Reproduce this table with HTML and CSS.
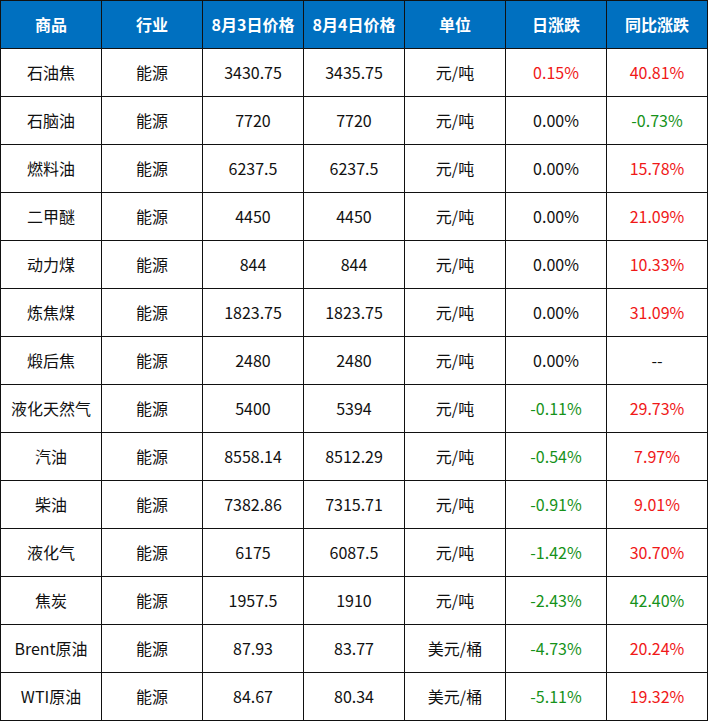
FILE: index.html
```html
<!DOCTYPE html>
<html lang="zh-CN">
<head>
<meta charset="utf-8">
<title>商品价格</title>
<link rel="stylesheet" href="styles.css">
</head>
<body>
<table class="price-table">
  <colgroup>
    <col><col><col><col><col><col><col>
  </colgroup>
  <thead>
    <tr><th>商品</th><th>行业</th><th>8月3日价格</th><th>8月4日价格</th><th>单位</th><th>日涨跌</th><th>同比涨跌</th></tr>
  </thead>
  <tbody>
    <tr><td>石油焦</td><td>能源</td><td>3430.75</td><td>3435.75</td><td>元/吨</td><td class="up">0.15%</td><td class="up">40.81%</td></tr>
    <tr><td>石脑油</td><td>能源</td><td>7720</td><td>7720</td><td>元/吨</td><td>0.00%</td><td class="down">-0.73%</td></tr>
    <tr><td>燃料油</td><td>能源</td><td>6237.5</td><td>6237.5</td><td>元/吨</td><td>0.00%</td><td class="up">15.78%</td></tr>
    <tr><td>二甲醚</td><td>能源</td><td>4450</td><td>4450</td><td>元/吨</td><td>0.00%</td><td class="up">21.09%</td></tr>
    <tr><td>动力煤</td><td>能源</td><td>844</td><td>844</td><td>元/吨</td><td>0.00%</td><td class="up">10.33%</td></tr>
    <tr><td>炼焦煤</td><td>能源</td><td>1823.75</td><td>1823.75</td><td>元/吨</td><td>0.00%</td><td class="up">31.09%</td></tr>
    <tr><td>煅后焦</td><td>能源</td><td>2480</td><td>2480</td><td>元/吨</td><td>0.00%</td><td>--</td></tr>
    <tr><td>液化天然气</td><td>能源</td><td>5400</td><td>5394</td><td>元/吨</td><td class="down">-0.11%</td><td class="up">29.73%</td></tr>
    <tr><td>汽油</td><td>能源</td><td>8558.14</td><td>8512.29</td><td>元/吨</td><td class="down">-0.54%</td><td class="up">7.97%</td></tr>
    <tr><td>柴油</td><td>能源</td><td>7382.86</td><td>7315.71</td><td>元/吨</td><td class="down">-0.91%</td><td class="up">9.01%</td></tr>
    <tr><td>液化气</td><td>能源</td><td>6175</td><td>6087.5</td><td>元/吨</td><td class="down">-1.42%</td><td class="up">30.70%</td></tr>
    <tr><td>焦炭</td><td>能源</td><td>1957.5</td><td>1910</td><td>元/吨</td><td class="down">-2.43%</td><td class="down">42.40%</td></tr>
    <tr><td>Brent原油</td><td>能源</td><td>87.93</td><td>83.77</td><td>美元/桶</td><td class="down">-4.73%</td><td class="up">20.24%</td></tr>
    <tr><td>WTI原油</td><td>能源</td><td>84.67</td><td>80.34</td><td>美元/桶</td><td class="down">-5.11%</td><td class="up">19.32%</td></tr>
  </tbody>
</table>
</body>
</html>
```

FILE: styles.css
```css
html, body {
  margin: 0;
  padding: 0;
  background: #ffffff;
}

body {
  font-family: "Noto Sans CJK SC", "Noto Sans", sans-serif;
  color: #111111;
}

.price-table {
  width: 708px;
  border-collapse: collapse;
  table-layout: fixed;
}

.price-table col {
  width: 101px;
}

.price-table tr {
  height: 48px;
}

.price-table th,
.price-table td {
  border: 1px solid #111111;
  padding: 0 0 2px 0;
  text-align: center;
  vertical-align: middle;
  font-size: 16px;
  line-height: 20px;
  white-space: nowrap;
}

.price-table th {
  background: #0070c0;
  color: #ffffff;
  font-weight: 700;
}

.price-table td {
  font-weight: 400;
}

.price-table td.up {
  color: #f01818;
}

.price-table td.down {
  color: #16921a;
}
```
